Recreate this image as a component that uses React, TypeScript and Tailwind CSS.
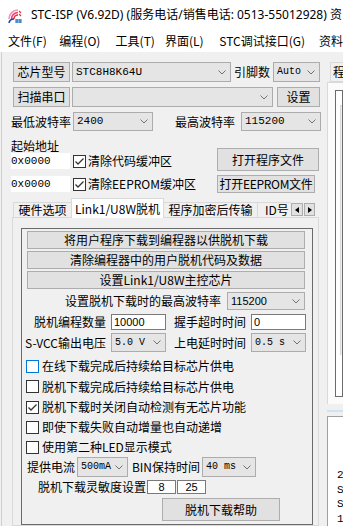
import React from "react";

const cjk = "font-['Noto_Sans_CJK_SC',sans-serif]";
const mono = "font-['Liberation_Mono','Noto_Sans_CJK_SC',monospace] text-[11px]";
const monoSm = "font-['Liberation_Mono','Noto_Sans_CJK_SC',monospace] text-[10px]";
const sans = "font-['Liberation_Sans',sans-serif] text-[11px]";

const Chevron = () => (
  <svg width="8" height="5" viewBox="0 0 8 5" className="shrink-0">
    <polyline points="0.5,0.5 4,4 7.5,0.5" fill="none" stroke="#707070" strokeWidth="1" />
  </svg>
);

type Props = { className?: string; children?: React.ReactNode };

const Btn = ({ className = "", children }: Props) => (
  <div className={`flex items-center justify-center border border-[#adadad] bg-[#e1e1e1] whitespace-nowrap shrink-0 ${className}`}>
    {children}
  </div>
);

const Combo = ({ className = "", children }: Props) => (
  <div className={`flex items-center justify-between border border-[#acacac] bg-[#e5e5e5] pl-[3px] pr-[4px] whitespace-pre shrink-0 ${className}`}>
    <span>{children}</span>
    <Chevron />
  </div>
);

const Check = ({ checked = false, hover = false }: { checked?: boolean; hover?: boolean }) => (
  <div
    className={`w-[13px] h-[13px] shrink-0 border bg-white flex items-center justify-center ${
      hover ? "border-[#0078d7]" : "border-[#333333]"
    }`}
  >
    {checked && (
      <svg width="11" height="11" viewBox="0 0 11 11">
        <polyline points="1.5,5.5 4,8 9.5,2.5" fill="none" stroke="#333333" strokeWidth="1.3" />
      </svg>
    )}
  </div>
);

const AppIcon = () => (
  <svg width="14" height="14" viewBox="0 0 14 14" className="shrink-0">
    <path d="M1 10 A9 9 0 0 1 10 1" fill="none" stroke="#f48fb1" strokeWidth="1.6" />
    <path d="M3.5 10 A6.5 6.5 0 0 1 10 3.5" fill="none" stroke="#ec407a" strokeWidth="1.6" />
    <path d="M6 10 A4 4 0 0 1 10 6" fill="none" stroke="#e53935" strokeWidth="1.6" />
    <path d="M11 2 L13 4 M11 5 L13 7" stroke="#e53935" strokeWidth="1.2" />
    <path d="M1 14 A5 5 0 0 1 6 10" fill="none" stroke="#1e40af" strokeWidth="1.6" />
    <path d="M7 11 H14 M7 13 H14 M9 10 V14 M12 10 V14" stroke="#1565c0" strokeWidth="1" />
  </svg>
);

const CheckRow = ({ className = "", checked, hover, children }: Props & { checked?: boolean; hover?: boolean }) => (
  <div className={`flex items-center ml-[4px] ${className}`}>
    <Check checked={checked} hover={hover} />
    <span className="ml-[3px] whitespace-nowrap">{children}</span>
  </div>
);

export default function App() {
  return (
    <div className={`w-[343px] h-[526px] overflow-hidden bg-[#f0f0f0] text-black ${cjk} text-[12px] leading-none flex flex-col`}>
      {/* title bar */}
      <div className="h-[30px] bg-white flex items-center shrink-0 whitespace-nowrap">
        <div className="ml-[8px] mt-[1px]">
          <AppIcon />
        </div>
        <span className="ml-[9px] font-['Noto_Sans','Noto_Sans_CJK_SC',sans-serif] text-[12px]">
          STC-ISP (V6.92D) (服务电话/销售电话: 0513-55012928) 资
        </span>
      </div>

      {/* menu bar */}
      <div className="h-[22px] bg-white flex items-center shrink-0 whitespace-nowrap">
        <span className="w-[60px] pl-[8px]">文件(F)</span>
        <span className="w-[57px]">编程(O)</span>
        <span className="w-[50px]">工具(T)</span>
        <span className="w-[55px]">界面(L)</span>
        <span className="w-[101px]">STC调试接口(G)</span>
        <span>资料</span>
      </div>

      {/* body */}
      <div className="flex flex-1 min-h-0 pl-[1px]">
        {/* left column */}
        <div className="w-[326px] shrink-0 border-l border-[#cfcfcf] flex flex-col">
          <div className="flex h-[20px] mt-[10px] ml-[11px]">
            <Btn className="w-[57px]">芯片型号</Btn>
            <Combo className={`w-[159px] ml-[2px] ${mono}`}>STC8H8K64U</Combo>
            <span className="w-[42px] flex items-center justify-center">引脚数</span>
            <Combo className={`w-[47px] ${monoSm}`}>Auto</Combo>
          </div>

          <div className="flex h-[20px] mt-[5px] ml-[11px]">
            <Btn className="w-[57px]">扫描串口</Btn>
            <Combo className="w-[201px] ml-[2px]"></Combo>
            <Btn className="w-[43px] ml-[4px]">设置</Btn>
          </div>

          <div className="flex h-[19px] mt-[5px] ml-[9px]">
            <span className="w-[62px] flex items-center">最低波特率</span>
            <Combo className={`w-[80px] ${mono}`}>2400</Combo>
            <span className="w-[88px] pl-[22px] flex items-center">最高波特率</span>
            <Combo className={`w-[80px] ${mono}`}>115200</Combo>
          </div>

          {/* start address / files */}
          <div className="flex ml-[9px]">
            <div className="w-[206px] flex flex-col">
              <span className="mt-[9px] h-[12px]">起始地址</span>
              <div className="flex items-center h-[16px] mt-[1px]">
                <div className={`w-[59px] h-[16px] bg-white flex items-center ${mono}`}>0x0000</div>
                <div className="ml-[3px]">
                  <Check checked />
                </div>
                <span className="ml-[2px] whitespace-nowrap">清除代码缓冲区</span>
              </div>
              <div className="flex items-center h-[16px] mt-[7px]">
                <div className={`w-[59px] h-[16px] bg-white flex items-center ${mono}`}>0x0000</div>
                <div className="ml-[3px]">
                  <Check checked />
                </div>
                <span className="ml-[2px] whitespace-nowrap">清除EEPROM缓冲区</span>
              </div>
            </div>
            <div className="flex flex-col">
              <Btn className="w-[102px] h-[23px] mt-[17px]">打开程序文件</Btn>
              <Btn className="w-[98px] h-[18px] mt-[4px] tracking-[-0.3px]">打开EEPROM文件</Btn>
            </div>
          </div>

          {/* tabs */}
          <div className="flex items-end h-[19px] mt-[5px] ml-[11px] whitespace-nowrap">
            <div className="w-[58px] h-[15px] border-t border-l border-[#d9d9d9] flex items-center justify-center">硬件选项</div>
            <div className="relative z-10 w-[93px] h-[20px] -mb-[1px] bg-white border-t border-l border-r border-[#d9d9d9] flex items-center justify-center">
              Link1/U8W脱机
            </div>
            <div className="w-[94px] h-[15px] border-t border-r border-[#d9d9d9] flex items-center justify-center">程序加密后传输</div>
            <div className="w-[33px] h-[15px] border-t border-[#d9d9d9] flex items-center pl-[7px] overflow-hidden">ID号</div>
            <div className="w-[12px] h-[13px] mb-[1px] border border-[#adadad] bg-[#e1e1e1] flex items-center justify-center">
              <svg width="4" height="6" viewBox="0 0 4 6"><polygon points="4,0 0,3 4,6" fill="#000" /></svg>
            </div>
            <div className="w-[11px] h-[13px] mb-[1px] ml-[1px] border border-[#adadad] bg-[#e1e1e1] flex items-center justify-center">
              <svg width="4" height="6" viewBox="0 0 4 6"><polygon points="0,0 4,3 0,6" fill="#000" /></svg>
            </div>
          </div>

          {/* tab pane */}
          <div className="flex-1 ml-[10px] w-[307px] border border-[#d9d9d9] bg-[#f0f0f0] flex flex-col">
            <div className="ml-[8px] mt-[10px] w-[292px] flex-1 border border-[#6b6b6b] flex flex-col">
              <Btn className="w-[278px] h-[18px] ml-[5px] mt-[2px]">将用户程序下载到编程器以供脱机下载</Btn>
              <Btn className="w-[278px] h-[18px] ml-[5px] mt-[2px]">清除编程器中的用户脱机代码及数据</Btn>
              <Btn className="w-[278px] h-[18px] ml-[5px] mt-[2px]">设置Link1/U8W主控芯片</Btn>

              <div className="flex h-[18px] mt-[3px] ml-[43px]">
                <span className="flex items-center whitespace-nowrap">设置脱机下载时的最高波特率</span>
                <Combo className={`w-[78px] ml-[6px] ${sans}`}>115200</Combo>
              </div>

              <div className="flex h-[16px] mt-[4px]">
                <span className="w-[84px] flex items-center justify-end whitespace-nowrap">脱机编程数量</span>
                <div className={`w-[55px] ml-[5px] border border-[#7a7a7a] bg-white flex items-center pl-[2px] ${sans}`}>10000</div>
                <span className="w-[80px] flex items-center justify-end whitespace-nowrap">握手超时时间</span>
                <div className={`w-[55px] ml-[5px] border border-[#7a7a7a] bg-white flex items-center pl-[2px] ${sans}`}>0</div>
              </div>

              <div className="flex h-[19px] mt-[3px]">
                <span className="w-[84px] flex items-center justify-end whitespace-nowrap">S-VCC输出电压</span>
                <Combo className={`w-[55px] ml-[5px] ${monoSm}`}>5.0 V</Combo>
                <span className="w-[80px] flex items-center justify-end whitespace-nowrap">上电延时时间</span>
                <Combo className={`w-[55px] ml-[5px] ${monoSm}`}>0.5 s</Combo>
              </div>

              <CheckRow className="h-[20px] mt-[4px]" hover>在线下载完成后持续给目标芯片供电</CheckRow>
              <CheckRow className="h-[21px]">脱机下载完成后持续给目标芯片供电</CheckRow>
              <CheckRow className="h-[20px]" checked>脱机下载时关闭自动检测有无芯片功能</CheckRow>
              <CheckRow className="h-[20px]">即使下载失败自动增量也自动递增</CheckRow>
              <CheckRow className="h-[20px]">使用第二种LED显示模式</CheckRow>

              <div className="flex h-[20px] ml-[5px]">
                <span className="w-[50px] flex items-center whitespace-nowrap">提供电流</span>
                <Combo className={`w-[51px] ${monoSm}`}>500mA</Combo>
                <span className="w-[74px] flex items-center justify-end pr-[2px] whitespace-nowrap">BIN保持时间</span>
                <Combo className={`w-[54px] ${monoSm}`}>40 ms</Combo>
              </div>

              <div className="flex h-[14px] mt-[3px] ml-[16px]">
                <span className="flex items-center whitespace-nowrap">脱机下载灵敏度设置</span>
                <div className={`w-[29px] ml-[1px] border border-[#7a7a7a] bg-white flex items-center justify-center ${sans}`}>8</div>
                <div className={`w-[29px] ml-[1px] border border-[#7a7a7a] bg-white flex items-center justify-center ${sans}`}>25</div>
              </div>

              <Btn className="w-[118px] h-[23px] mt-[4px] ml-[140px]">脱机下载帮助</Btn>
            </div>
          </div>
        </div>

        {/* right column (cut off) */}
        <div className="flex-1 min-w-0 overflow-hidden flex flex-col">
          <div className="mt-[10px] ml-[3px] w-[20px] h-[20px] shrink-0 border border-[#d9d9d9] flex items-center pl-[2px]">程</div>
          <div className="h-[322px] shrink-0 border-l border-t border-[#d9d9d9] bg-[#fbfbfb] flex flex-col">
            <div className="ml-[7px] mt-[7px] h-[307px] border border-[#6b6b6b] bg-white flex flex-col">
              <div className="ml-[4px] mt-[14px] h-[250px] border-l border-t border-[#d9d9d9] bg-[#f0f0f0]"></div>
            </div>
          </div>
          <div className="mt-[6px] h-[2px] bg-[#cce4f7] shrink-0"></div>
          <div className={`mt-[4px] flex-1 border-l border-t border-[#a0a0a0] bg-white pl-[9px] pt-[51px] ${mono} leading-[14.5px]`}>
            <div>2</div>
            <div>S</div>
            <div>S</div>
            <div>1</div>
          </div>
        </div>
      </div>
    </div>
  );
}
